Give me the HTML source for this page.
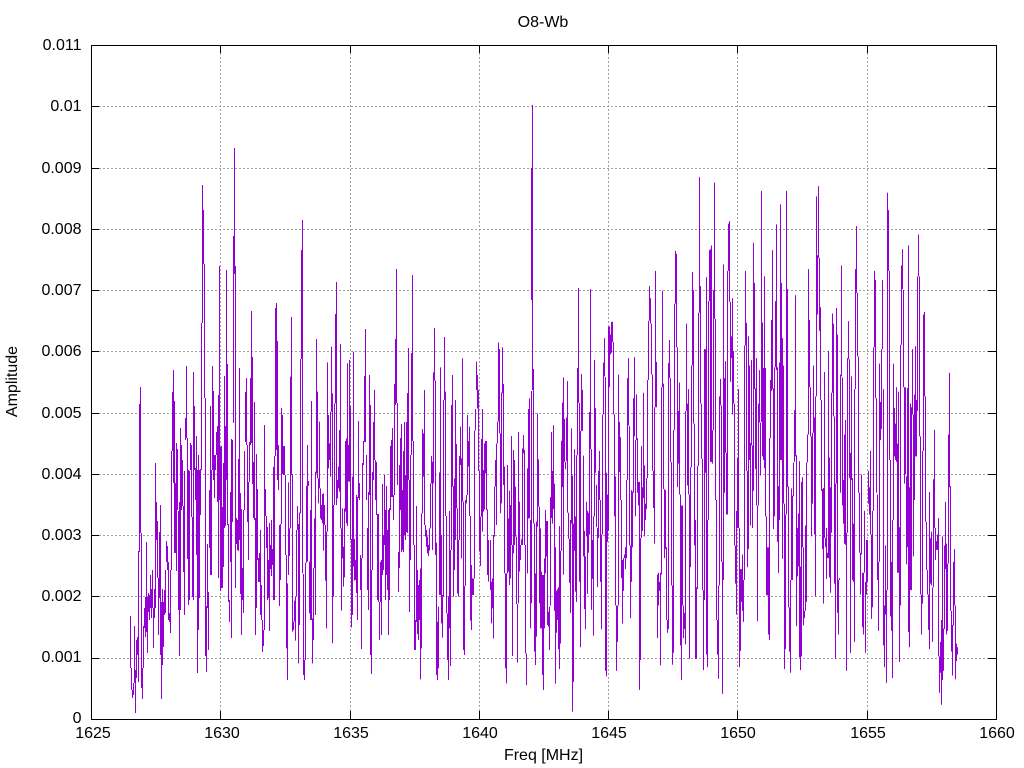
<!DOCTYPE html>
<html><head><meta charset="utf-8"><title>O8-Wb</title>
<style>html,body{margin:0;padding:0;background:#fff}svg{display:block}text{font-family:"Liberation Sans",sans-serif;font-size:16px;fill:#000}</style>
</head><body>
<svg width="1024" height="768" viewBox="0 0 1024 768" xmlns="http://www.w3.org/2000/svg">
<rect width="1024" height="768" fill="#fff"/>
<g shape-rendering="crispEdges">
<path fill="none" stroke="#a0a0a0" stroke-width="1" stroke-dasharray="2 2" d="M99 106.5H988M99 168.5H988M99 229.5H988M99 290.5H988M99 351.5H988M99 413.5H988M99 474.5H988M99 535.5H988M99 596.5H988M99 658.5H988M220.5 53V711M350.5 53V711M479.5 53V711M608.5 53V711M737.5 53V711M867.5 53V711"/>
<g fill="none" stroke="#9400d3" stroke-width="1">
<path transform="translate(.5,0)" d="M130 616V668M131 668V690M132 690V698M133 683V695M134 626V683M135 670V713M136 640V678M137 637V655M138 551V682M139 404V552M140 387V533M141 533V688M142 668V699M143 626V668M144 608V628M145 597V637M146 542V632M147 597V653M148 593V612M149 595V620M150 575V608M151 589V618M152 570V608M153 608V648M154 589V618M155 463V608M156 502V540M157 521V578M158 578V635M159 532V598M160 505V655M161 602V699M162 589V665M163 602V647M164 590V615M165 570V613M166 541V562M167 546V570M168 562V620M169 613V622M170 570V633M171 451V570M172 392V451M173 370V483M174 401V553M175 483V553M176 443V571M177 449V510M178 511V610M179 502V656M180 428V610M181 445V510M182 460V506M183 506V572M184 471V615M185 418V440M186 366V438M187 438V559M188 470V605M189 471V600M190 443V470M191 445V517M192 517V597M193 372V600M194 406V470M195 468V500M196 436V555M197 470V673M198 455V630M199 470V598M200 469V515M201 323V470M202 185V323M203 210V264M204 264V398M205 398V656M206 606V672M207 544V608M208 592V650M209 490V548M210 406V575M211 470V575M212 366V470M213 391V480M214 455V498M215 455V470M216 432V455M217 426V502M218 395V578M219 266V500M220 447V591M221 446V588M222 507V588M223 463V567M224 376V528M225 426V526M226 270V480M227 364V525M228 524V602M229 600V622M230 492V562M231 439V638M232 440V522M233 236V423M234 148V274M235 266V588M236 518V544M237 520V550M238 459V551M239 368V540M240 493V594M241 509V635M242 568V600M243 510V613M244 451V510M245 392V442M246 378V445M247 445V522M248 482V560M249 442V482M250 378V445M251 311V443M252 357V484M253 462V518M254 402V520M255 518V635M256 454V608M257 489V560M258 558V582M259 553V582M260 530V615M261 585V620M262 620V652M263 630V646M264 425V630M265 489V516M266 516V548M267 527V600M268 560V598M269 523V631M270 545V569M271 520V576M272 549V565M273 467V600M274 456V600M275 308V456M276 303V450M277 341V480M278 445V490M279 525V606M280 524V580M281 408V524M282 415V474M283 446V475M284 446V475M355 560V580M356 495V593M357 497V620M358 421V498M359 483V500M360 555V590M361 558V649M362 463V558M363 441V465M364 376V442M365 329V442M366 455V500M367 528V590M368 492V610M369 375V495M370 405V655M371 570V674M372 472V570M373 422V480M374 390V460M375 460V500M376 462V515M377 514V600M378 514V602M379 602V640M380 562V602M381 560V635M382 484V575M383 535V570M384 475V545M385 510V600M386 486V575M387 530V590M388 510V635M389 508V600M390 446V510M391 440V497M392 428V497M393 495V520M394 384V495M395 339V405M396 269V403M397 403V485M398 552V592M399 465V568M400 438V510M401 424V552M402 490V550M403 451V552M404 422V535M405 475V540M406 422V532M407 393V533M408 348V480M409 480V612M410 455V560M411 353V455M412 275V441M413 441V545M414 545V650M415 620V650M416 506V622M417 570V634M418 585V640M419 580V620M532 105V390M531 168V300"/>
<path transform="translate(285.5,340) scale(1,.33333)" d="M0 405V645M1 645V925M2 730V1020M3 427V705M4 565V648M5 110V565M6 -69V405M7 402V875M8 845V870M9 782V845M10 770V902M11 570V770M12 498V570M13 552V970M14 518V855M15 57V520M16 -270V57M17 -360V700M18 702V1005M19 960V1020M20 668V960M21 438V668M22 315V665M23 423V438M24 665V820M25 510V840M26 183V840M27 835V970M28 684V900M29 535V684M30 395V825M31 -3V400M32 155V415M33 415V490M34 245V445M35 445V535M36 495V540M37 462V550M38 460V632M39 495V555M40 555V722M41 575V865M42 67V575M43 225V385M44 310V360M45 215V410M46 20V215M47 160V910M48 495V770M49 190V495M50 -78V190M51 -174V495M52 420V475M53 380V445M54 270V455M55 12V565M56 565V812M57 505V655M58 620V740M59 505V712M60 303V515M61 295V550M62 70V558M63 315V425M64 60V425M65 198V600M66 597V862M67 410V825M68 35V680M69 597V722"/>
<path transform="translate(420.5,340) scale(1,.33333)" d="M0 685V1018M1 520V925M2 267V520M3 280V410M4 150V555M5 555V590M6 570V620M7 590V640M8 615V648M9 565V632M10 430V565M11 348V430M12 365V630M13 97V430M14 -36V122M15 122V645M16 608V1005M17 845V1020M18 800V985M19 397V765M20 82V765M21 585V850M22 765V893M23 180V770M24 -9V180M25 155V528M26 528V820M27 820V960M28 770V1020M29 513V865M30 630V978M31 195V630M32 105V440M33 438V770M34 415V690M35 180V600M36 312V505M37 505V760M38 600V770M39 348V600M40 260V375M41 355V655M42 55V485M43 485V930M44 738V945M45 480V738M46 465V490M47 225V465M48 303V380M49 260V528M50 528V842M51 675V870M52 715V765M53 715V765M54 272V715M55 207V272M56 65V150M57 105V205M58 150V393M59 393V635M60 530V678M61 297V530M62 207V575M63 390V515M64 310V508M65 303V400M66 303V510M67 508V705M68 600V725"/>
<path transform="translate(320.5,240) scale(1,.33333)" d="M170 900V1050M171 1025V1150M172 1015V1105M173 885V1195M174 740V890M175 660V740M176 610V855M177 545V610M178 307V545M179 327V580M180 580V820M181 458V790M182 322V460M183 432V735M184 680V1000M185 1000V1285M186 1000V1330M187 675V1000M188 835V995M189 752V1035M190 795V1015M191 588V915M192 915V1248M193 630V940M194 660V915M195 740V890M196 890V1092M197 1092V1268M198 576V1090M199 785V995M200 915V960M201 898V915M202 625V915M203 585V640M204 630V915M205 915V1240M206 1240V1335M207 685V1000M208 507V835M209 475V835M210 840V1165M211 453V1090M213 387V850M214 850V1235M215 1000V1275M216 845V1190M217 520V860M218 658V800M219 800V1090M220 865V1165M221 995V1165M222 1005V1305M223 1005V1350M224 955V1165M225 810V1000M226 843V950M227 843V1155M228 1115V1160M229 1100V1230"/>
<path transform="translate(550.5,160) scale(1,.36364)" d="M0 927V1225M1 748V985M2 855V1000M3 729V960M4 890V1240M5 1065V1440M6 1185V1300M7 1180V1265M8 1175V1345M9 1007V1400M10 1075V1330M11 772V1075M12 667V900M13 598V1140M14 712V830M15 830V850M16 708V828M17 608V970M18 970V1042M19 1042V1163M20 990V1245M21 738V1000M22 868V1517M23 1000V1435M24 795V1075M25 980V1187M26 812V1215M27 572V812M28 352V668M29 668V1160M30 745V1340M31 589V745M32 632V745M33 813V1090M34 1020V1235M35 1090V1290M36 940V1035M37 965V1193M38 970V1080M39 693V1030M40 355V795M41 795V1237M42 1045V1152M43 980V1308M44 550V980M45 682V860M46 893V1010M47 1012V1175M48 855V1040M49 800V935M50 935V1160M51 1030V1290M52 700V1030M53 557V700M54 490V595M55 597V1405M56 860V1420M57 920V1050M58 458V1020M59 458V625M60 480V535M61 445V530M62 445V500M63 500V700M64 700V980M65 870V1225M66 1225V1405M67 1225V1325M68 590V1225M69 720V858M70 762V935M71 935V1150M72 1100V1275M73 1095V1185M74 1085V1095M75 1065V1125M76 880V1095M77 600V880M78 545V730M79 732V1060M80 1060V1260M81 908V1160M82 912V1065M83 655V915M84 542V760M85 770V980M86 645V770M87 765V915M88 885V950M89 885V1457M90 1040V1375M91 787V1040M92 900V1020M93 640V930M94 840V1035M95 945V990M96 875V960M97 605V875M98 442V605M99 347V442M100 380V450M101 450V590M102 590V855M103 855V957M104 680V1055M105 305V680M106 555V680M107 1140V1315M108 1135V1225M109 1160V1185M110 1135V1390M111 625V1140M112 360V625M113 615V905M114 905V1095M115 908V1070M116 1065V1265M117 1265V1300M118 558V1290M119 495V600M120 600V830M121 830V1170M122 1170V1388M123 742V1355M124 395V742M125 250V395M126 258V515M127 515V900M128 690V835M129 612V920M130 920V1335M131 950V1430M132 950V1225M133 1225V1315M134 1245V1290M135 690V1332M136 450V690M137 670V895M138 630V920M139 920V1372M140 845V1120M141 565V845M142 308V565M143 358V725M144 725V1060M145 990V1372M146 1175V1372M147 842V1180M148 420V842M149 47V420M150 347V670M151 670V822M152 822V1183M153 1183V1403M154 520V1210M155 520V860M156 322V1360M157 990V1395M158 388V990M159 248V388M160 245V830M161 235V830M162 743V835M163 358V743M164 62V437M165 437V935M166 935V1265M167 1265V1360M168 1170V1427M169 650V1170M170 602V675M171 675V1105M172 1105V1468M173 287V1155M174 600V915M175 553V805M176 805V975M177 305V975M178 175V305M179 168V390M180 390V610M181 485V545M182 380V700M183 525V670M184 670V1060M185 1060V1165M186 965V1250M187 820V1012M188 630V1012M189 1012V1395M190 1125V1350M191 1125V1215M192 1085V1240M193 1155V1270M194 510V1155M195 305V510M196 448V855M197 855V1120M198 485V1070M199 565V825M200 778V1005M201 550V785M202 785V1012M203 228V910M204 338V630M205 628V850M206 545V950M207 950V1268M208 670V950M209 578V722M210 722V868M211 85V720M212 447V815M213 572V825M214 320V848M215 572V980M216 980V1197M217 1065V1197M218 1065V1305M219 765V1320M220 605V765M221 440V635M222 248V630M223 628V1015M224 570V980M225 388V570M226 177V578M227 570V1050M228 897V1135M229 557V990"/>
<path transform="translate(780.5,160) scale(1,.36364)" d="M0 122V825M1 338V825M2 490V1097M3 565V945M4 945V1400M5 975V1345M6 85V975M7 355V900M8 898V1230M9 1230V1352M10 1155V1410M11 903V1155M12 923V1155M13 832V925M14 688V830M15 372V815M16 812V1282M17 1012V1145M18 972V1118M19 828V1368M20 1118V1403M21 885V1365M22 872V1065M23 1065V1280M24 1240V1260M25 1005V1240M26 832V1215M27 755V832M28 300V755M29 440V625M30 625V760M31 760V1035M32 750V945M33 565V750M34 708V1030M35 650V1200M36 100V650M37 262V425M38 72V270M39 270V470M40 405V660M41 660V910M42 905V1070M43 902V1220M44 583V1040M45 1040V1065M46 1012V1152M47 1080V1095M48 525V1095M49 818V1148M50 900V1190M51 640V1025M52 422V640M53 450V705M54 705V1165M55 890V1372M56 407V890M57 480V1245M58 1155V1305M59 1150V1155M60 590V915M61 290V595M62 598V950M63 880V1000M64 755V1055M65 715V1058M66 1025V1405M67 545V1025M68 443V548M69 548V875M70 805V1355M71 595V880M72 875V1155M73 1000V1160M74 630V1325M75 300V630M76 182V365M77 365V540M78 540V915M79 915V1080M80 1080V1195M81 865V1085M82 1135V1285M83 1135V1305M84 965V1135M85 1160V1355M86 1045V1195M87 1045V1160M88 855V945M89 900V975M90 800V1030M91 1030V1262M92 965V1230M93 515V965M94 305V515M95 330V655M96 655V915M97 920V1155M98 1105V1295M99 560V1105M100 665V770M101 520V740M102 330V520M103 630V1335M104 1225V1395M105 1060V1250M106 1183V1438M107 90V1183M108 138V305M109 305V825M110 825V1255M111 1105V1295M112 990V1425M113 560V990M114 682V815M115 725V825M116 625V830M117 780V1135M118 637V1135M119 1010V1380M120 508V1225M121 290V508M122 245V355M123 357V625M124 625V890M125 625V865M126 870V1112M127 627V1065M128 235V1298M129 900V1340M130 670V1183M131 680V1183M132 520V700M133 700V1090M134 645V935M135 512V815M136 660V815M137 320V690M138 205V320M139 320V760M140 760V1195M141 1195V1305M142 800V1220M143 425V800M144 418V650M145 650V995M146 995V1128M147 1128V1195M148 1195V1292M149 913V1345M150 1040V1165M151 1022V1170M152 1175V1325M153 878V1175M154 742V1012M155 1012V1100M156 1048V1072M157 1030V1072M158 985V1365M159 1365V1465M160 1325V1410M161 1265V1498M162 1035V1430M163 1288V1405M164 1060V1290M165 940V1125M166 1055V1305M167 1110V1295M168 755V1110M169 585V900M170 897V1240M171 1240V1352M172 1278V1418M173 1105V1280M174 1070V1225M175 1225V1428M176 1330V1378M177 1340V1360"/>
</g>
<path fill="none" stroke="#000" stroke-width="1" d="M91.5 45.5H996.5V719.5H91.5ZM91 106.5H99M91 168.5H99M91 229.5H99M91 290.5H99M91 351.5H99M91 413.5H99M91 474.5H99M91 535.5H99M91 596.5H99M91 658.5H99M996 106.5H988M996 168.5H988M996 229.5H988M996 290.5H988M996 351.5H988M996 413.5H988M996 474.5H988M996 535.5H988M996 596.5H988M996 658.5H988M220.5 45V53M350.5 45V53M479.5 45V53M608.5 45V53M737.5 45V53M867.5 45V53M220.5 719V711M350.5 719V711M479.5 719V711M608.5 719V711M737.5 719V711M867.5 719V711"/>
</g>
<g text-anchor="end">
<text x="81.5" y="50">0.011</text>
<text x="81.5" y="111">0.01</text>
<text x="81.5" y="173">0.009</text>
<text x="81.5" y="234">0.008</text>
<text x="81.5" y="295">0.007</text>
<text x="81.5" y="356">0.006</text>
<text x="81.5" y="418">0.005</text>
<text x="81.5" y="479">0.004</text>
<text x="81.5" y="540">0.003</text>
<text x="81.5" y="601">0.002</text>
<text x="81.5" y="662">0.001</text>
<text x="81.5" y="723">0</text>
</g>
<g text-anchor="middle">
<text x="93" y="738">1625</text>
<text x="222" y="738">1630</text>
<text x="351" y="738">1635</text>
<text x="480" y="738">1640</text>
<text x="609" y="738">1645</text>
<text x="738" y="738">1650</text>
<text x="868" y="738">1655</text>
<text x="997" y="738">1660</text>
<text x="543" y="27">O8-Wb</text>
<text x="543.5" y="760">Freq [MHz]</text>
<text transform="translate(17,381.5) rotate(-90)">Amplitude</text>
</g>
</svg>
</body></html>
